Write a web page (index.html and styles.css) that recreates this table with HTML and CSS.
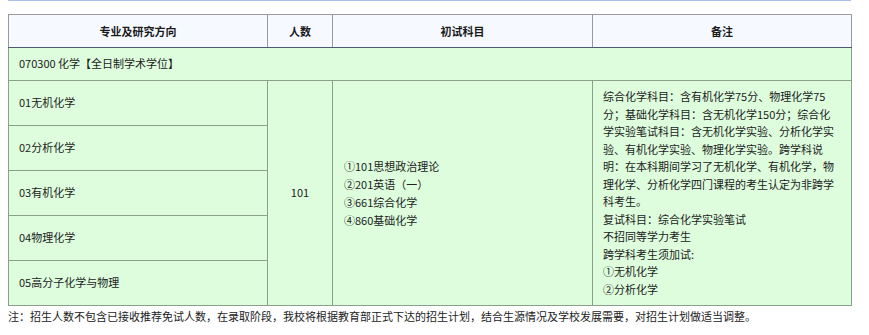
FILE: index.html
```html
<!DOCTYPE html>
<html lang="zh-CN">
<head>
<meta charset="utf-8">
<title>招生目录</title>
<link rel="stylesheet" href="styles.css">
</head>
<body>
<div class="topline"></div>
<table class="plan">
  <colgroup>
    <col class="c1"><col class="c2"><col class="c3"><col class="c4">
  </colgroup>
  <thead>
    <tr class="head">
      <th>专业及研究方向</th>
      <th>人数</th>
      <th>初试科目</th>
      <th>备注</th>
    </tr>
  </thead>
  <tbody>
    <tr class="major">
      <td colspan="4">070300 化学【全日制学术学位】</td>
    </tr>
    <tr class="dir">
      <td>01无机化学</td>
      <td rowspan="5" class="num">101</td>
      <td rowspan="5" class="subjects">
        <div>①101思想政治理论</div>
        <div>②201英语（一）</div>
        <div>③661综合化学</div>
        <div>④860基础化学</div>
      </td>
      <td rowspan="5" class="remark">
        <div>综合化学科目：含有机化学75分、物理化学75分；基础化学科目：含无机化学150分；综合化学实验笔试科目：含无机化学实验、分析化学实验、有机化学实验、物理化学实验。跨学科说明：在本科期间学习了无机化学、有机化学，物理化学、分析化学四门课程的考生认定为非跨学科考生。</div>
        <div>复试科目：综合化学实验笔试</div>
        <div>不招同等学力考生</div>
        <div>跨学科考生须加试:</div>
        <div>①无机化学</div>
        <div>②分析化学</div>
      </td>
    </tr>
    <tr class="dir"><td>02分析化学</td></tr>
    <tr class="dir"><td>03有机化学</td></tr>
    <tr class="dir"><td>04物理化学</td></tr>
    <tr class="dir"><td>05高分子化学与物理</td></tr>
  </tbody>
</table>
<p class="note">注：招生人数不包含已接收推荐免试人数，在录取阶段，我校将根据教育部正式下达的招生计划，结合生源情况及学校发展需要，对招生计划做适当调整。</p>
</body>
</html>
```

FILE: styles.css
```css
html, body {
  margin: 0;
  padding: 0;
  background: #ffffff;
}
body {
  padding: 0 18px 0 8px;
  font-family: "Noto Sans CJK SC", "Noto Sans", sans-serif;
  font-size: 11px;
  color: #222222;
}
.topline {
  height: 0;
  width: 843px;
  border-bottom: 2px solid #a9bfe3;
  margin-top: -1px;
}
.plan {
  margin-top: 13px;
  width: 843px;
  border-collapse: collapse;
  table-layout: fixed;
  border: 1px solid #8e8e8e;
}
.c1 { width: 259px; }
.c2 { width: 65px; }
.c3 { width: 260px; }
.c4 { width: 259px; }
.head th {
  height: 32px;
  padding: 0;
  background: #f6f9ff;
  font-weight: bold;
  text-align: center;
  border: 1px solid #9a9a9a;
  border-bottom: 1px solid #4d5b70;
  color: #1a1a1a;
}
.plan td {
  background: #ddfddd;
  border: 1px solid #8aa08a;
  padding: 0 0 0 10px;
  vertical-align: middle;
  line-height: 17.5px;
}
.major td {
  height: 32px;
}
.dir td {
  height: 44px;
}
.num {
  text-align: center;
  padding: 0 !important;
}
.subjects {
  padding-left: 11px !important;
  line-height: 18px !important;
}
.remark {
  padding: 0 16px 0 10px !important;
}
.note {
  margin: 1px 0 0 0;
  line-height: 18px;
  color: #222222;
}
```
